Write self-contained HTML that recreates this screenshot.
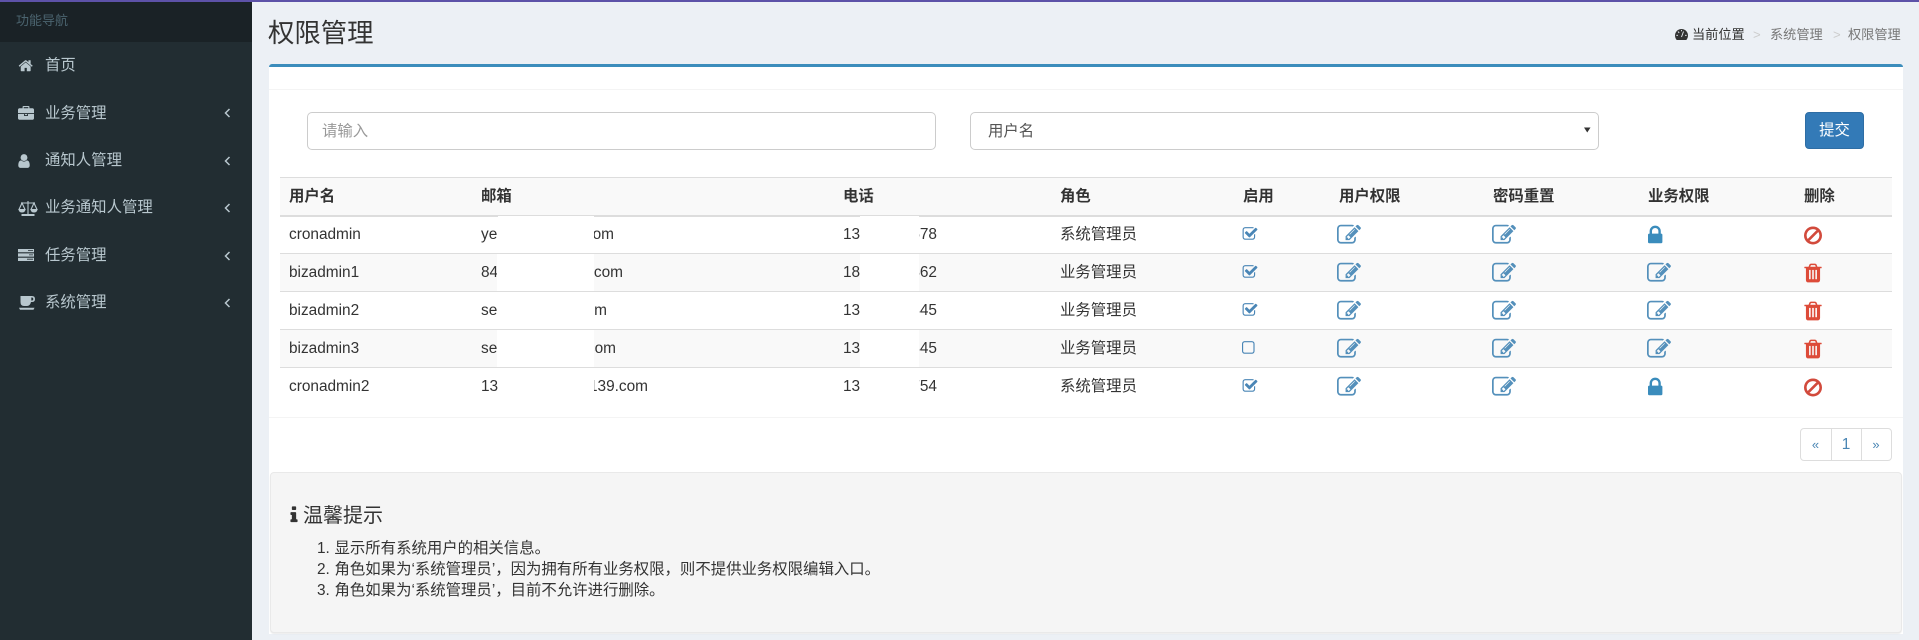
<!DOCTYPE html>
<html lang="zh-CN">
<head>
<meta charset="utf-8">
<title>权限管理</title>
<style>
*{box-sizing:border-box;margin:0;padding:0}
html,body{width:1919px;height:640px;overflow:hidden;background:#ecf0f5}
body{position:relative;font-family:"Liberation Sans","Noto Sans CJK SC",sans-serif;font-size:15.4px;color:#333}
.a{position:absolute}
.t{position:absolute;white-space:nowrap;line-height:38px;height:38px}
svg{position:absolute;display:block;overflow:visible}
.nav{position:absolute;left:45px;color:#b8c7ce;line-height:24px;white-space:nowrap}
.h{font-weight:700}
.mask{position:absolute;background:#fff;height:37px;z-index:3}
.line{position:absolute;left:280px;width:1612px;height:1px;background:#ddd}
.shade{position:absolute;left:280px;width:1612px;height:37px;background:#f9f9f9}
.pg{position:absolute;top:428px;height:33px;border:1px solid #ddd;background:#fff;color:#4a86b4;text-align:center;line-height:31px}
.li{position:absolute;left:334.500px;line-height:21px;white-space:nowrap;color:#333}
.n{position:absolute;left:317px;line-height:21px;color:#333}
</style>
</head>
<body>
<svg width="0" height="0" style="position:absolute">
<defs>
<symbol id="edit" viewBox="0 0 1792 1792"><path fill="#5490bb" d="M888 1184l116-116-152-152-116 116v56h96v96h56zm440-720q-16-16-33 1l-350 350q-17 17-1 33t33-1l350-350q17-17 1-33zm80 594v190q0 119-84.500 203.500t-203.500 84.500h-832q-119 0-203.500-84.500t-84.500-203.500v-832q0-119 84.500-203.500t203.500-84.500h832q63 0 117 25 15 7 18 23 3 17-9 29l-49 49q-14 14-32 8-23-6-45-6h-832q-66 0-113 47t-47 113v832q0 66 47 113t113 47h832q66 0 113-47t47-113v-126q0-13 9-22l64-64q15-15 35-7t20 29zm-96-738l288 288-672 672h-288v-288zm444 132l-92 92-288-288 92-92q28-28 68-28t68 28l152 152q28 28 28 68t-28 68z"/></symbol>
<symbol id="chk" viewBox="0 0 1792 1792"><path fill="#4a86b6" d="M1472 930v318q0 119-84.500 203.500t-203.500 84.500h-832q-119 0-203.500-84.500t-84.500-203.500v-832q0-119 84.500-203.500t203.500-84.500h832q63 0 117 25 15 7 18 23 3 17-9 29l-49 49q-10 10-23 10-3 0-9-2-23-6-45-6h-832q-66 0-113 47t-47 113v832q0 66 47 113t113 47h832q66 0 113-47t47-113v-254q0-13 9-22l64-64q10-10 23-10 6 0 12 3 20 8 20 29zm231-489l-814 814q-24 24-57 24t-57-24l-430-430q-24-24-24-57t24-57l110-110q24-24 57-24t57 24l263 263 647-647q24-24 57-24t57 24l110 110q24 24 24 57t-24 57z"/></symbol>
<symbol id="sq" viewBox="0 0 1792 1792"><path fill="#4a86b6" d="M1120 256h-832q-66 0-113 47t-47 113v832q0 66 47 113t113 47h832q66 0 113-47t47-113v-832q0-66-47-113t-113-47zm288 160v832q0 119-84.500 203.500t-203.500 84.500h-832q-119 0-203.500-84.500t-84.500-203.500v-832q0-119 84.500-203.500t203.500-84.500h832q119 0 203.500 84.500t84.500 203.500z"/></symbol>
<symbol id="lock" viewBox="0 0 1792 1792"><path fill="#3a8cbc" d="M640 768h512v-192q0-106-75-181t-181-75-181 75-75 181v192zm832 96v576q0 40-28 68t-68 28h-960q-40 0-68-28t-28-68v-576q0-40 28-68t68-28h32v-192q0-184 132-316t316-132 316 132 132 316v192h32q40 0 68 28t28 68z"/></symbol>
<symbol id="ban" viewBox="0 0 1792 1792"><path fill="#d24a3c" d="M1312 893q0-161-87-295l-754 753q137 89 297 89 111 0 211.500-43.500t173.500-116.500 116-174.500 43-212.500zm-999 299l755-754q-135-91-300-91-148 0-273 73t-198 199-73 274q0 162 89 299zm1223-299q0 157-61 300t-163.500 246-245 164-298.500 61-298.500-61-245-164-163.500-246-61-300 61-299.500 163.500-245.500 245-164 298.500-61 298.500 61 245 164 163.500 245.500 61 299.500z"/></symbol>
<symbol id="trash" viewBox="0 0 1792 1792"><path fill="#dd4b39" d="M704 1376v-704q0-14-9-23t-23-9h-64q-14 0-23 9t-9 23v704q0 14 9 23t23 9h64q14 0 23-9t9-23zm256 0v-704q0-14-9-23t-23-9h-64q-14 0-23 9t-9 23v704q0 14 9 23t23 9h64q14 0 23-9t9-23zm256 0v-704q0-14-9-23t-23-9h-64q-14 0-23 9t-9 23v704q0 14 9 23t23 9h64q14 0 23-9t9-23zm-544-992h448l-48-117q-7-9-17-11h-317q-10 2-17 11zm928 32v64q0 14-9 23t-23 9h-96v948q0 83-47 143.500t-113 60.500h-832q-66 0-113-58.500t-47-141.500v-952h-96q-14 0-23-9t-9-23v-64q0-14 9-23t23-9h309l70-167q15-37 54-63t79-26h320q40 0 79 26t54 63l70 167h309q14 0 23 9t9 23z"/></symbol>
</defs>
</svg>

<!-- top strip + sidebar -->
<div class="a" style="left:0;top:2px;width:252px;height:638px;background:#222d32"></div>
<div class="a" style="left:0;top:2px;width:252px;height:40px;background:#1a2226"></div>
<div class="a" style="left:0;top:0;width:1919px;height:2px;background:#5d52a8;z-index:5"></div>
<div class="a" style="left:16px;top:11px;font-size:13px;line-height:20px;color:#4b646f;white-space:nowrap">功能导航</div>

<svg style="left:18px;top:57.500px" width="15.4" height="15.4" viewBox="0 0 1792 1792"><path fill="#b8c7ce" d="M1472 992v480q0 26-19 45t-45 19h-384v-384h-256v384h-384q-26 0-45-19t-19-45v-480q0-1 .5-3t.5-3l575-474 575 474q1 2 1 6zm223-69l-62 74q-8 9-21 11h-3q-13 0-21-7l-692-577-692 577q-12 8-24 7-13-2-21-11l-62-74q-8-10-7-23.500t11-21.500l719-599q32-26 76-26t76 26l244 204v-195q0-14 9-23t23-9h192q14 0 23 9t9 23v408l219 182q10 8 11 21.500t-7 23.500z"/></svg>
<div class="nav" style="top:54px">首页</div>

<svg style="left:18px;top:106px" width="16" height="16" viewBox="0 0 1792 1792"><path fill="#b8c7ce" d="M640 256h512v-128h-512v128zm1152 640v480q0 66-47 113t-113 47h-1472q-66 0-113-47t-47-113v-480h672v160q0 26 19 45t45 19h320q26 0 45-19t19-45v-160h672zm-768 0v128h-256v-128h256zm768-480v384h-1792v-384q0-66 47-113t113-47h352v-160q0-40 28-68t68-28h576q40 0 68 28t28 68v160h352q66 0 113 47t47 113z"/></svg>
<div class="nav" style="top:102px">业务管理</div>

<svg style="left:16px;top:153px" width="16" height="16" viewBox="0 0 1792 1792"><path fill="#b8c7ce" d="M1536 1399q0 109-62.500 187t-150.500 78h-854q-88 0-150.500-78t-62.500-187q0-85 8.500-160.500t31.500-152 58.500-131 94-89 134.500-34.500q131 128 313 128t313-128q76 0 134.500 34.500t94 89 58.500 131 31.500 152 8.500 160.500zm-256-887q0 159-112.500 271.500t-271.500 112.500-271.500-112.500-112.500-271.500 112.500-271.500 271.500-112.500 271.500 112.500 112.500 271.500z"/></svg>
<div class="nav" style="top:149px">通知人管理</div>

<svg style="left:18px;top:200px" width="20" height="16" viewBox="0 0 20 16"><g fill="none" stroke="#b8c7ce" stroke-width="1.1"><path d="M10 1v13M3 3h14M4 15h12"/><path d="M4 3L1 9.500h6zM16 3l-3 6.500h6z"/></g><path fill="#b8c7ce" d="M.5 9.500h7q-.5 3-3.500 3t-3.500-3zM12.500 9.500h7q-.5 3-3.500 3t-3.500-3zM3.500 14h13v2h-13z"/></svg>
<div class="nav" style="top:196px">业务通知人管理</div>

<svg style="left:18px;top:249px" width="16" height="12" viewBox="0 0 16 12"><path fill="#b8c7ce" d="M0 0h16v3.300H0zM0 4.400h16v3.200H0zM0 8.700h16V12H0z"/><path fill="#222d32" d="M10 1h5v.8h-5zM11 5.500h4v.8h-4zM9 9.800h6v.8H9z"/></svg>
<div class="nav" style="top:244px">任务管理</div>

<svg style="left:19px;top:296px" width="16" height="14" viewBox="0 0 16 14"><path fill="#b8c7ce" d="M1.500 0h11.500q3 0 3 3t-3 3h-1q-1 4-4 4h-3q-3.500 0-3.500-4zM12.300 1.500v3h.7q1.300 0 1.300-1.500s0-1.500-1.300-1.500zM0 11.700h15.500l-1 2h-13.500z"/></svg>
<div class="nav" style="top:291px">系统管理</div>

<svg style="left:223px;top:108px" width="8" height="10" viewBox="0 0 8 10"><path d="M6.500 1L2.500 5l4 4" fill="none" stroke="#b8c7ce" stroke-width="1.500"/></svg>
<svg style="left:223px;top:156px" width="8" height="10" viewBox="0 0 8 10"><path d="M6.500 1L2.500 5l4 4" fill="none" stroke="#b8c7ce" stroke-width="1.500"/></svg>
<svg style="left:223px;top:203px" width="8" height="10" viewBox="0 0 8 10"><path d="M6.500 1L2.500 5l4 4" fill="none" stroke="#b8c7ce" stroke-width="1.500"/></svg>
<svg style="left:223px;top:251px" width="8" height="10" viewBox="0 0 8 10"><path d="M6.500 1L2.500 5l4 4" fill="none" stroke="#b8c7ce" stroke-width="1.500"/></svg>
<svg style="left:223px;top:298px" width="8" height="10" viewBox="0 0 8 10"><path d="M6.500 1L2.500 5l4 4" fill="none" stroke="#b8c7ce" stroke-width="1.500"/></svg>

<!-- heading -->
<div class="a" style="left:268px;top:15px;font-size:26.400px;line-height:36px;color:#333;white-space:nowrap">权限管理</div>
<svg style="left:1675px;top:29px" width="13" height="11" viewBox="0 0 13 11"><path fill="#333" d="M6.500 0C2.900 0 0 2.900 0 6.500c0 1.700.6 3.200 1.700 4.500h9.600c1.100-1.300 1.700-2.800 1.700-4.500C13 2.900 10.100 0 6.500 0z"/><path stroke="#ecf0f5" stroke-width=".9" fill="none" d="M6.500 8L8.500 2.500M3 2.500l1.200 1.500M1.300 6.300h1.700M10 6.300h1.700M6.500 1v1.300"/></svg>
<div class="a" style="left:1692px;top:25px;font-size:13.200px;line-height:20px;white-space:nowrap;color:#333">当前位置</div>
<div class="a" style="left:1753px;top:25px;font-size:13.200px;line-height:20px;color:#ccc">&gt;</div>
<div class="a" style="left:1770px;top:25px;font-size:13.200px;line-height:20px;white-space:nowrap;color:#777">系统管理</div>
<div class="a" style="left:1833px;top:25px;font-size:13.200px;line-height:20px;color:#ccc">&gt;</div>
<div class="a" style="left:1848px;top:25px;font-size:13.200px;line-height:20px;white-space:nowrap;color:#777">权限管理</div>

<!-- main box -->
<div class="a" style="left:269px;top:64px;width:1634px;height:570px;background:#fff;border-top:3px solid #3c8dbc;border-radius:3px 3px 0 0"></div>
<div class="a" style="left:269px;top:89px;width:1634px;height:1px;background:#f4f4f4"></div>
<div class="a" style="left:307px;top:112px;width:629px;height:38px;border:1px solid #ccc;border-radius:5px;background:#fff;padding-left:14px;line-height:37px;color:#999">请输入</div>
<div class="a" style="left:970px;top:112px;width:629px;height:38px;border:1px solid #ccc;border-radius:5px;background:#fff;padding-left:17px;line-height:38px;color:#555">用户名</div>
<svg style="left:1584px;top:127px" width="7" height="6" viewBox="0 0 7 6"><path d="M0 .5h6.500L3.250 5.500z" fill="#333"/></svg>
<div class="a" style="left:1805px;top:112px;width:59px;height:37px;background:#337ab7;border:1px solid #2e6da4;border-radius:4px;color:#fff;text-align:center;line-height:35px">提交</div>

<!-- table -->
<div class="a" style="left:280px;top:177px;width:1612px;height:38px;background:#f9f9f9"></div>
<div class="shade" style="top:254px"></div>
<div class="shade" style="top:330px"></div>
<div class="line" style="top:177px"></div>
<div class="line" style="top:215px;height:2px"></div>
<div class="line" style="top:253px"></div>
<div class="line" style="top:291px"></div>
<div class="line" style="top:329px"></div>
<div class="line" style="top:367px"></div>

<div class="t h" style="left:289px;top:178px">用户名</div>
<div class="t h" style="left:481px;top:178px">邮箱</div>
<div class="t h" style="left:843px;top:178px">电话</div>
<div class="t h" style="left:1060px;top:178px">角色</div>
<div class="t h" style="left:1243px;top:178px">启用</div>
<div class="t h" style="left:1339px;top:178px">用户权限</div>
<div class="t h" style="left:1493px;top:178px">密码重置</div>
<div class="t h" style="left:1648px;top:178px">业务权限</div>
<div class="t h" style="left:1804px;top:178px">删除</div>

<!-- row 1 -->
<div class="t" style="left:289px;top:216px">cronadmin</div>
<div class="t" style="left:481px;top:216px">ye</div>
<div class="t" style="right:1305px;top:216px">om</div>
<div class="t" style="left:843px;top:216px">13</div>
<div class="t" style="right:982px;top:216px">678</div>
<div class="t" style="left:1060px;top:216px">系统管理员</div>
<svg style="left:1242px;top:226px" width="16" height="16"><use href="#chk"/></svg>
<svg style="left:1337px;top:223px" width="24" height="24"><use href="#edit"/></svg>
<svg style="left:1492px;top:223px" width="24" height="24"><use href="#edit"/></svg>
<svg style="left:1644px;top:224px" width="22.400" height="22.400"><use href="#lock"/></svg>
<svg style="left:1804px;top:224.500px" width="21" height="21"><use href="#ban"/></svg>
<div class="mask" style="left:498px;top:216px;width:96px"></div>
<div class="mask" style="left:860px;top:216px;width:59px"></div>

<!-- row 2 -->
<div class="t" style="left:289px;top:254px">bizadmin1</div>
<div class="t" style="left:481px;top:254px">84</div>
<div class="t" style="right:1296px;top:254px">.com</div>
<div class="t" style="left:843px;top:254px">18</div>
<div class="t" style="right:982px;top:254px">862</div>
<div class="t" style="left:1060px;top:254px">业务管理员</div>
<svg style="left:1242px;top:264px" width="16" height="16"><use href="#chk"/></svg>
<svg style="left:1337px;top:261px" width="24" height="24"><use href="#edit"/></svg>
<svg style="left:1492px;top:261px" width="24" height="24"><use href="#edit"/></svg>
<svg style="left:1647px;top:261px" width="24" height="24"><use href="#edit"/></svg>
<svg style="left:1802.400px;top:262.400px" width="22" height="22"><use href="#trash"/></svg>
<div class="mask" style="left:497px;top:254px;width:97px"></div>
<div class="mask" style="left:860px;top:254px;width:59px"></div>

<!-- row 3 -->
<div class="t" style="left:289px;top:292px">bizadmin2</div>
<div class="t" style="left:481px;top:292px">se</div>
<div class="t" style="right:1312px;top:292px">om</div>
<div class="t" style="left:843px;top:292px">13</div>
<div class="t" style="right:982px;top:292px">345</div>
<div class="t" style="left:1060px;top:292px">业务管理员</div>
<svg style="left:1242px;top:302px" width="16" height="16"><use href="#chk"/></svg>
<svg style="left:1337px;top:299px" width="24" height="24"><use href="#edit"/></svg>
<svg style="left:1492px;top:299px" width="24" height="24"><use href="#edit"/></svg>
<svg style="left:1647px;top:299px" width="24" height="24"><use href="#edit"/></svg>
<svg style="left:1802.400px;top:300.400px" width="22" height="22"><use href="#trash"/></svg>
<div class="mask" style="left:498px;top:292px;width:96px"></div>
<div class="mask" style="left:860px;top:292px;width:59px"></div>

<!-- row 4 -->
<div class="t" style="left:289px;top:330px">bizadmin3</div>
<div class="t" style="left:481px;top:330px">se</div>
<div class="t" style="right:1303px;top:330px">com</div>
<div class="t" style="left:843px;top:330px">13</div>
<div class="t" style="right:982px;top:330px">345</div>
<div class="t" style="left:1060px;top:330px">业务管理员</div>
<svg style="left:1242px;top:340px" width="16" height="16"><use href="#sq"/></svg>
<svg style="left:1337px;top:337px" width="24" height="24"><use href="#edit"/></svg>
<svg style="left:1492px;top:337px" width="24" height="24"><use href="#edit"/></svg>
<svg style="left:1647px;top:337px" width="24" height="24"><use href="#edit"/></svg>
<svg style="left:1802.400px;top:338.400px" width="22" height="22"><use href="#trash"/></svg>
<div class="mask" style="left:497px;top:330px;width:97px"></div>
<div class="mask" style="left:860px;top:330px;width:59px"></div>

<!-- row 5 -->
<div class="t" style="left:289px;top:368px">cronadmin2</div>
<div class="t" style="left:481px;top:368px">13</div>
<div class="t" style="right:1271px;top:368px">139.com</div>
<div class="t" style="left:843px;top:368px">13</div>
<div class="t" style="right:982px;top:368px">754</div>
<div class="t" style="left:1060px;top:368px">系统管理员</div>
<svg style="left:1242px;top:378px" width="16" height="16"><use href="#chk"/></svg>
<svg style="left:1337px;top:375px" width="24" height="24"><use href="#edit"/></svg>
<svg style="left:1492px;top:375px" width="24" height="24"><use href="#edit"/></svg>
<svg style="left:1644px;top:376px" width="22.400" height="22.400"><use href="#lock"/></svg>
<svg style="left:1804px;top:376.500px" width="21" height="21"><use href="#ban"/></svg>
<div class="mask" style="left:499px;top:368px;width:95px"></div>
<div class="mask" style="left:860px;top:368px;width:59px"></div>

<!-- footer + pagination -->
<div class="a" style="left:269px;top:417px;width:1634px;height:1px;background:#f4f4f4"></div>
<div class="pg" style="left:1799.500px;width:32px;border-radius:4px 0 0 4px;font-size:13px">«</div>
<div class="pg" style="left:1830.500px;width:31px">1</div>
<div class="pg" style="left:1860.500px;width:31px;border-radius:0 4px 4px 0;font-size:13px">»</div>

<!-- callout -->
<div class="a" style="left:270px;top:472px;width:1632px;height:161px;background:#f5f5f5;border:1px solid #e9e9e9;border-radius:4px;box-shadow:0 1px 1px rgba(0,0,0,.08)"></div>
<svg style="left:284px;top:505px" width="20" height="20" viewBox="0 0 1792 1792"><path fill="#333" d="M1216 1344v128q0 26-19 45t-45 19h-512q-26 0-45-19t-19-45v-128q0-26 19-45t45-19h64v-384h-64q-26 0-45-19t-19-45v-128q0-26 19-45t45-19h384q26 0 45 19t19 45v576h64q26 0 45 19t19 45zm-128-1152v192q0 26-19 45t-45 19h-256q-26 0-45-19t-19-45v-192q0-26 19-45t45-19h256q26 0 45 19t19 45z"/></svg>
<div class="a" style="left:303px;top:502px;font-size:20px;line-height:28px;white-space:nowrap;color:#333">温馨提示</div>
<div class="n" style="top:538px">1.</div>
<div class="li" style="top:538px">显示所有系统用户的相关信息。</div>
<div class="n" style="top:559px">2.</div>
<div class="li" style="top:559px">角色如果为‘系统管理员’，因为拥有所有业务权限，则不提供业务权限编辑入口。</div>
<div class="n" style="top:580px">3.</div>
<div class="li" style="top:580px">角色如果为‘系统管理员’，目前不允许进行删除。</div>
</body>
</html>
